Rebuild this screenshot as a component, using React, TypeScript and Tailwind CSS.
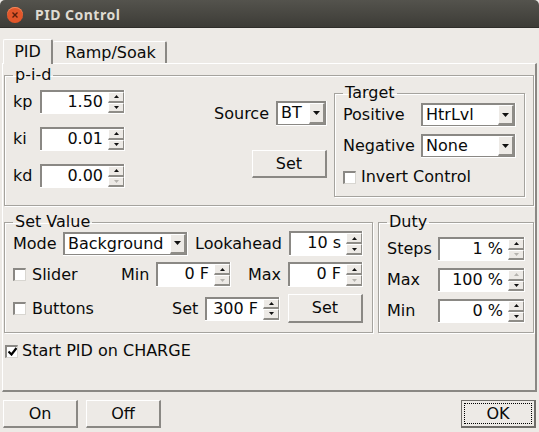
import React from "react";

function Tri({ up, off, small }: { up?: boolean; off?: boolean; small?: boolean }) {
  const w = small ? 5 : 7;
  const h = small ? 3 : 4;
  return (
    <svg width={w} height={h} viewBox="0 0 7 4" preserveAspectRatio="none" className="block">
      <path d={up ? "M3.5 0 L7 4 H0 Z" : "M0 0 H7 L3.5 4 Z"} fill={off ? "#b5b3ae" : "#111"} />
    </svg>
  );
}

function SpinBtn({ up, off }: { up?: boolean; off?: boolean }) {
  return (
    <div className="flex-1 flex items-center justify-center bg-[#edeae6] border-t border-l border-t-white border-l-white border-b-2 border-r border-b-[#8f8d88] border-r-[#8f8d88]">
      <Tri up={up} off={off} small />
    </div>
  );
}

function Spin({ value, w, h = 24, upOff, downOff }: { value: string; w: number; h?: number; upOff?: boolean; downOff?: boolean }) {
  return (
    <div
      className="flex shrink-0 border-b border-r border-b-white border-r-white"
      style={{ width: w, height: h }}
    >
      <div className="flex flex-1 bg-white border-t-2 border-l-2 border-t-[#8a8884] border-l-[#8a8884] min-w-0">
        <div className="flex-1 text-right pr-[5px] leading-[20px]">{value}</div>
        <div className="w-[16px] flex flex-col shrink-0">
          <SpinBtn up off={upOff} />
          <SpinBtn off={downOff} />
        </div>
      </div>
    </div>
  );
}

function Combo({ value, w, h = 24 }: { value: string; w: number; h?: number }) {
  return (
    <div className="flex shrink-0 border-b border-r border-b-white border-r-white" style={{ width: w, height: h }}>
      <div className="flex flex-1 bg-white border-t-2 border-l-2 border-t-[#8a8884] border-l-[#8a8884] border-r border-b border-r-[#8a8884] border-b-[#8a8884] min-w-0">
        <div className="flex-1 pl-[3px] leading-[20px]">{value}</div>
        <div className="w-[16px] flex items-center justify-center bg-[#edeae6] border-t border-l border-t-white border-l-white border-b-2 border-r-2 border-b-[#8f8d88] border-r-[#8f8d88] shrink-0">
          <Tri />
        </div>
      </div>
    </div>
  );
}

function Check({ checked }: { checked?: boolean }) {
  return (
    <div className="w-[13px] h-[13px] shrink-0 bg-white border-t-2 border-l-2 border-t-[#8a8884] border-l-[#8a8884] border-b border-r border-b-[#d8d6d1] border-r-[#d8d6d1] flex items-center justify-center">
      {checked && (
        <svg width="9" height="9" viewBox="0 0 9 9">
          <path d="M0.5 4.5 L3.5 7.5 L8.5 1" fill="none" stroke="#000" strokeWidth="2.2" />
        </svg>
      )}
    </div>
  );
}

function Btn({ label, w, h = 29 }: { label: string; w: number; h?: number }) {
  return (
    <div
      className="flex items-center justify-center shrink-0 bg-[#edeae6] border-t border-l border-t-white border-l-white border-b-2 border-r-2 border-b-[#8a8884] border-r-[#8a8884]"
      style={{ width: w, height: h }}
    >
      {label}
    </div>
  );
}

function Group({ title, w, h, children }: { title: string; w: number; h: number; children: React.ReactNode }) {
  return (
    <fieldset
      className="shrink-0 border border-[#a5a39e] shadow-[1px_1px_0_#fff,inset_1px_1px_0_#fff]"
      style={{ width: w, height: h }}
    >
      <legend className="ml-[8px] px-[2px] leading-[18px]">{title}</legend>
      {children}
    </fieldset>
  );
}

export default function App() {
  return (
    <div
      className="w-[539px] h-[432px] overflow-hidden bg-[#edeae6] text-[16px] text-[#0a0a0a] flex flex-col"
      style={{ fontFamily: '"DejaVu Sans", sans-serif' }}
    >
      {/* Title bar */}
      <div className="h-[28px] shrink-0 flex items-center rounded-t-[5px] bg-gradient-to-b from-[#54534d] to-[#3d3c37] border-b border-[#2f2e2a]">
        <div className="ml-[7px] mt-[2px] w-[16px] h-[16px] rounded-full bg-[#e2562a] flex items-center justify-center shadow-[inset_0_1px_0_#f08a5f]">
          <svg width="8" height="8" viewBox="0 0 8 8">
            <path d="M1.5 1.5 L6.5 6.5 M6.5 1.5 L1.5 6.5" stroke="#5a1f0c" strokeWidth="1.4" />
          </svg>
        </div>
        <div
          className="ml-[12px] mt-[2px] text-[14px] font-bold text-[#dfdbd2] tracking-[0.5px]"
          style={{ fontFamily: '"Noto Sans", sans-serif' }}
        >
          PID Control
        </div>
      </div>

      {/* Tabs */}
      <div className="pl-[3px] pt-[11px] flex items-end h-[35px] shrink-0">
        <div className="w-[50px] h-[25px] -mb-px z-10 relative flex items-center justify-center bg-[#edeae6] border-t border-l border-t-white border-l-white border-r-2 border-r-[#8a8884] rounded-t-[2px]">
          PID
        </div>
        <div className="w-[114px] h-[22px] pl-[3px] flex items-center justify-center bg-[#edeae6] border-t border-t-white border-r-2 border-r-[#8a8884] rounded-t-[2px]">
          Ramp/Soak
        </div>
      </div>

      {/* Pane */}
      <div className="mx-[2px] h-[329px] shrink-0 flex flex-col border-t border-l border-t-white border-l-white border-b-2 border-r-2 border-b-[#8a8884] border-r-[#8a8884] pl-px pt-[2px]">
        <Group title="p-i-d" w={530} h={140}>
          <div className="flex pl-[8px]">
            <div className="w-[112px] flex flex-col gap-[13px] pt-[6px] shrink-0">
              <div className="flex items-center">
                <span className="w-[27px]">kp</span>
                <Spin value="1.50" w={85} />
              </div>
              <div className="flex items-center">
                <span className="w-[27px]">ki</span>
                <Spin value="0.01" w={85} />
              </div>
              <div className="flex items-center">
                <span className="w-[27px]">kd</span>
                <Spin value="0.00" w={85} downOff />
              </div>
            </div>
            <div className="w-[202px] flex flex-col items-end pt-[17px] shrink-0">
              <div className="flex items-center gap-[7px]">
                <span>Source</span>
                <Combo value="BT" w={51} h={25} />
              </div>
              <div className="mt-[24px]">
                <Btn label="Set" w={75} h={28} />
              </div>
            </div>
            <div className="ml-[7px]">
              <Group title="Target" w={191} h={113}>
                <div className="pl-[8px] flex flex-col">
                  <div className="flex items-center h-[24px] mt-px">
                    <span className="w-[78px]">Positive</span>
                    <Combo value="HtrLvl" w={95} />
                  </div>
                  <div className="flex items-center h-[24px] mt-[7px]">
                    <span className="w-[78px]">Negative</span>
                    <Combo value="None" w={95} />
                  </div>
                  <div className="flex items-center gap-[5px] h-[20px] mt-[9px]">
                    <Check />
                    <span>Invert Control</span>
                  </div>
                </div>
              </Group>
            </div>
          </div>
        </Group>

        <div className="flex gap-[5px] mt-[7px]">
          <Group title="Set Value" w={369} h={120}>
            <div className="pl-[8px] flex flex-col">
              <div className="flex items-center h-[25px]">
                <span className="w-[50px]">Mode</span>
                <Combo value="Background" w={125} />
                <span className="ml-[7px] w-[94px]">Lookahead</span>
                <Spin value="10 s" w={74} h={25} />
              </div>
              <div className="flex items-center h-[25px] mt-[6px]">
                <Check />
                <span className="ml-[6px] w-[89px]">Slider</span>
                <span className="w-[35px]">Min</span>
                <Spin value="0 F" w={75} h={25} downOff />
                <span className="ml-[17px] w-[40px]">Max</span>
                <Spin value="0 F" w={75} h={25} downOff />
              </div>
              <div className="flex items-center h-[29px] mt-[7px]">
                <Check />
                <span className="ml-[6px] w-[140px]">Buttons</span>
                <span className="w-[33px]">Set</span>
                <Spin value="300 F" w={75} h={24} />
                <div className="ml-[8px]">
                  <Btn label="Set" w={75} h={29} />
                </div>
              </div>
            </div>
          </Group>
          <Group title="Duty" w={156} h={120}>
            <div className="pl-[8px] pt-[6px] flex flex-col gap-[7px]">
              <div className="flex items-center">
                <span className="w-[51px]">Steps</span>
                <Spin value="1 %" w={87} downOff />
              </div>
              <div className="flex items-center">
                <span className="w-[51px]">Max</span>
                <Spin value="100 %" w={87} upOff />
              </div>
              <div className="flex items-center">
                <span className="w-[51px]">Min</span>
                <Spin value="0 %" w={87} />
              </div>
            </div>
          </Group>
        </div>

        <div className="flex items-center gap-[4px] ml-[1px] mt-[8px] h-[20px]">
          <Check checked />
          <span>Start PID on CHARGE</span>
        </div>
      </div>

      {/* Footer */}
      <div className="flex gap-[8px] px-[3px] pt-[8px]">
        <Btn label="On" w={75} h={28} />
        <Btn label="Off" w={75} h={28} />
        <div className="ml-auto w-[75px] h-[28px] p-[2px] bg-[#edeae6] border-t border-l border-t-[#6f6d69] border-l-[#6f6d69] border-b-2 border-r-2 border-b-[#6f6d69] border-r-[#6f6d69]">
          <div className="w-full h-full flex items-center justify-center border border-dotted border-black">OK</div>
        </div>
      </div>
    </div>
  );
}
